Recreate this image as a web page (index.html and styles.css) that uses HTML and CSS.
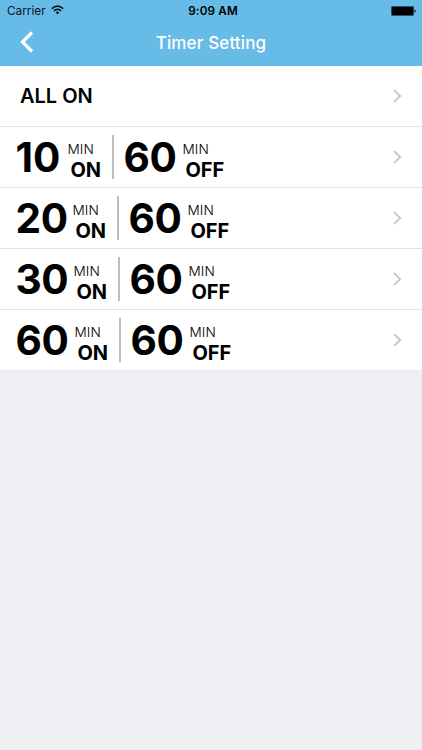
FILE: index.html
```
<!DOCTYPE html>
<html lang="en">
<head>
<meta charset="utf-8">
<title>Timer Setting</title>
<link rel="stylesheet" href="styles.css">
</head>
<body>
<header class="header">
  <div class="status">
    <div class="carrier"><span>Carrier</span>
      <svg class="wifi" width="13" height="10" viewBox="0 0 13 10" fill="none" stroke="#07151d" stroke-width="1.6"><path d="M.8 3.7Q6.5-1.4 12.2 3.7M2.8 5.9Q6.5 2.7 10.2 5.9"/><path d="M4.5 7.3Q6.5 5.8 8.5 7.3L6.5 9.4Z" fill="#07151d" stroke="none"/></svg>
    </div>
    <div class="clock">9:09 AM</div>
    <svg class="battery" width="25" height="10" viewBox="0 0 25 10"><rect x=".4" y=".4" width="22.2" height="9.2" rx="1" fill="#000" stroke="#2c5060" stroke-width=".8"/><path d="M23.4 3.2Q24.8 3.6 24.8 5T23.4 6.8Z" fill="#10202a"/></svg>
  </div>
  <nav class="nav">
    <svg class="back" width="14" height="22" viewBox="0 0 14 22" fill="none" stroke="#fff" stroke-width="3.2"><path d="M12 1.5L2.5 11L12 20.5"/></svg>
    <h1 class="title">Timer Setting</h1>
  </nav>
</header>
<main class="list">
  <div class="row"><span class="all">ALL ON</span><svg class="chevron" viewBox="0 0 9 14"><path d="M1 1L7.2 7L1 13"/></svg></div>
  <div class="row"><span class="num on-10">10</span><span class="unit on"><span class="min">MIN</span><b class="state">ON</b></span><i class="bar"></i><span class="num">60</span><span class="unit"><span class="min">MIN</span><b class="state">OFF</b></span><svg class="chevron" viewBox="0 0 9 14"><path d="M1 1L7.2 7L1 13"/></svg></div>
  <div class="row"><span class="num on-20">20</span><span class="unit on"><span class="min">MIN</span><b class="state">ON</b></span><i class="bar"></i><span class="num">60</span><span class="unit"><span class="min">MIN</span><b class="state">OFF</b></span><svg class="chevron" viewBox="0 0 9 14"><path d="M1 1L7.2 7L1 13"/></svg></div>
  <div class="row"><span class="num on-30">30</span><span class="unit on"><span class="min">MIN</span><b class="state">ON</b></span><i class="bar"></i><span class="num">60</span><span class="unit"><span class="min">MIN</span><b class="state">OFF</b></span><svg class="chevron" viewBox="0 0 9 14"><path d="M1 1L7.2 7L1 13"/></svg></div>
  <div class="row"><span class="num">60</span><span class="unit on"><span class="min">MIN</span><b class="state">ON</b></span><i class="bar"></i><span class="num">60</span><span class="unit"><span class="min">MIN</span><b class="state">OFF</b></span><svg class="chevron" viewBox="0 0 9 14"><path d="M1 1L7.2 7L1 13"/></svg></div>
</main>
</body>
</html>
```
FILE: styles.css
```
* { box-sizing: border-box; }
body {
  margin: 0;
  min-height: 750px;
  background: #efeff4;
  font-family: Inter, "Liberation Sans", sans-serif;
  color: #000;
}
.header { height: 66px; background: #66bbe7; }
.status {
  display: grid;
  grid-template-columns: 1fr auto 1fr;
  align-items: center;
  height: 22px;
  padding: 0 6px 0 7px;
  font-size: 12px;
  line-height: 22px;
}
.carrier { display: flex; align-items: center; gap: 5px; color: #07151d; font-size: 11.8px; }
.wifi { margin-top: -2px; }
.clock { padding-left: 3px; font-weight: 600; font-size: 11.7px; letter-spacing: 0.15px; }
.battery { justify-self: end; margin-top: -1px; }
.nav { display: flex; align-items: center; height: 42px; padding: 0 34px 0 20px; }
.back { flex: none; margin-top: -2px; }
.title {
  flex: 1;
  margin: 0;
  text-align: center;
  font-size: 17px;
  line-height: 42px;
  font-weight: 500;
  letter-spacing: 0.15px;
  color: #fff;
}
.list { background: #fff; }
.row {
  display: flex;
  align-items: center;
  height: 61px;
  padding: 0 20px 0 15px;
  border-bottom: 1px solid #e2e2e4;
}
.row:last-child { border-bottom-color: #e9e9ed; }
.all { padding-left: 5px; font-size: 20px; font-weight: 600; }
.num {
  width: 53px;
  flex: none;
  padding: 2px 0 0 0.6px;
  font-size: 40.6px;
  line-height: 58px;
  font-weight: 700;
  letter-spacing: -0.5px;
  white-space: nowrap;
}
.on-10 { width: 46px; letter-spacing: 0; }
.on-20 { width: 51px; }
.on-30 { width: 52px; }
.unit { display: flex; flex-direction: column; width: 52px; padding: 7px 0 0 6px; flex: none; }
.unit.on { width: 51px; }
.min { padding-left: 0.6px; font-size: 13.6px; line-height: 20px; font-weight: 300; }
.state { padding-left: 3.4px; font-size: 20px; line-height: 23px; font-weight: 700; }
.bar { width: 2px; height: 44px; margin-right: 9px; background: #bdbdbf; flex: none; }
.chevron { width: 9px; height: 14px; margin-left: auto; fill: none; stroke: #c7c7cc; stroke-width: 1.8; }
```
